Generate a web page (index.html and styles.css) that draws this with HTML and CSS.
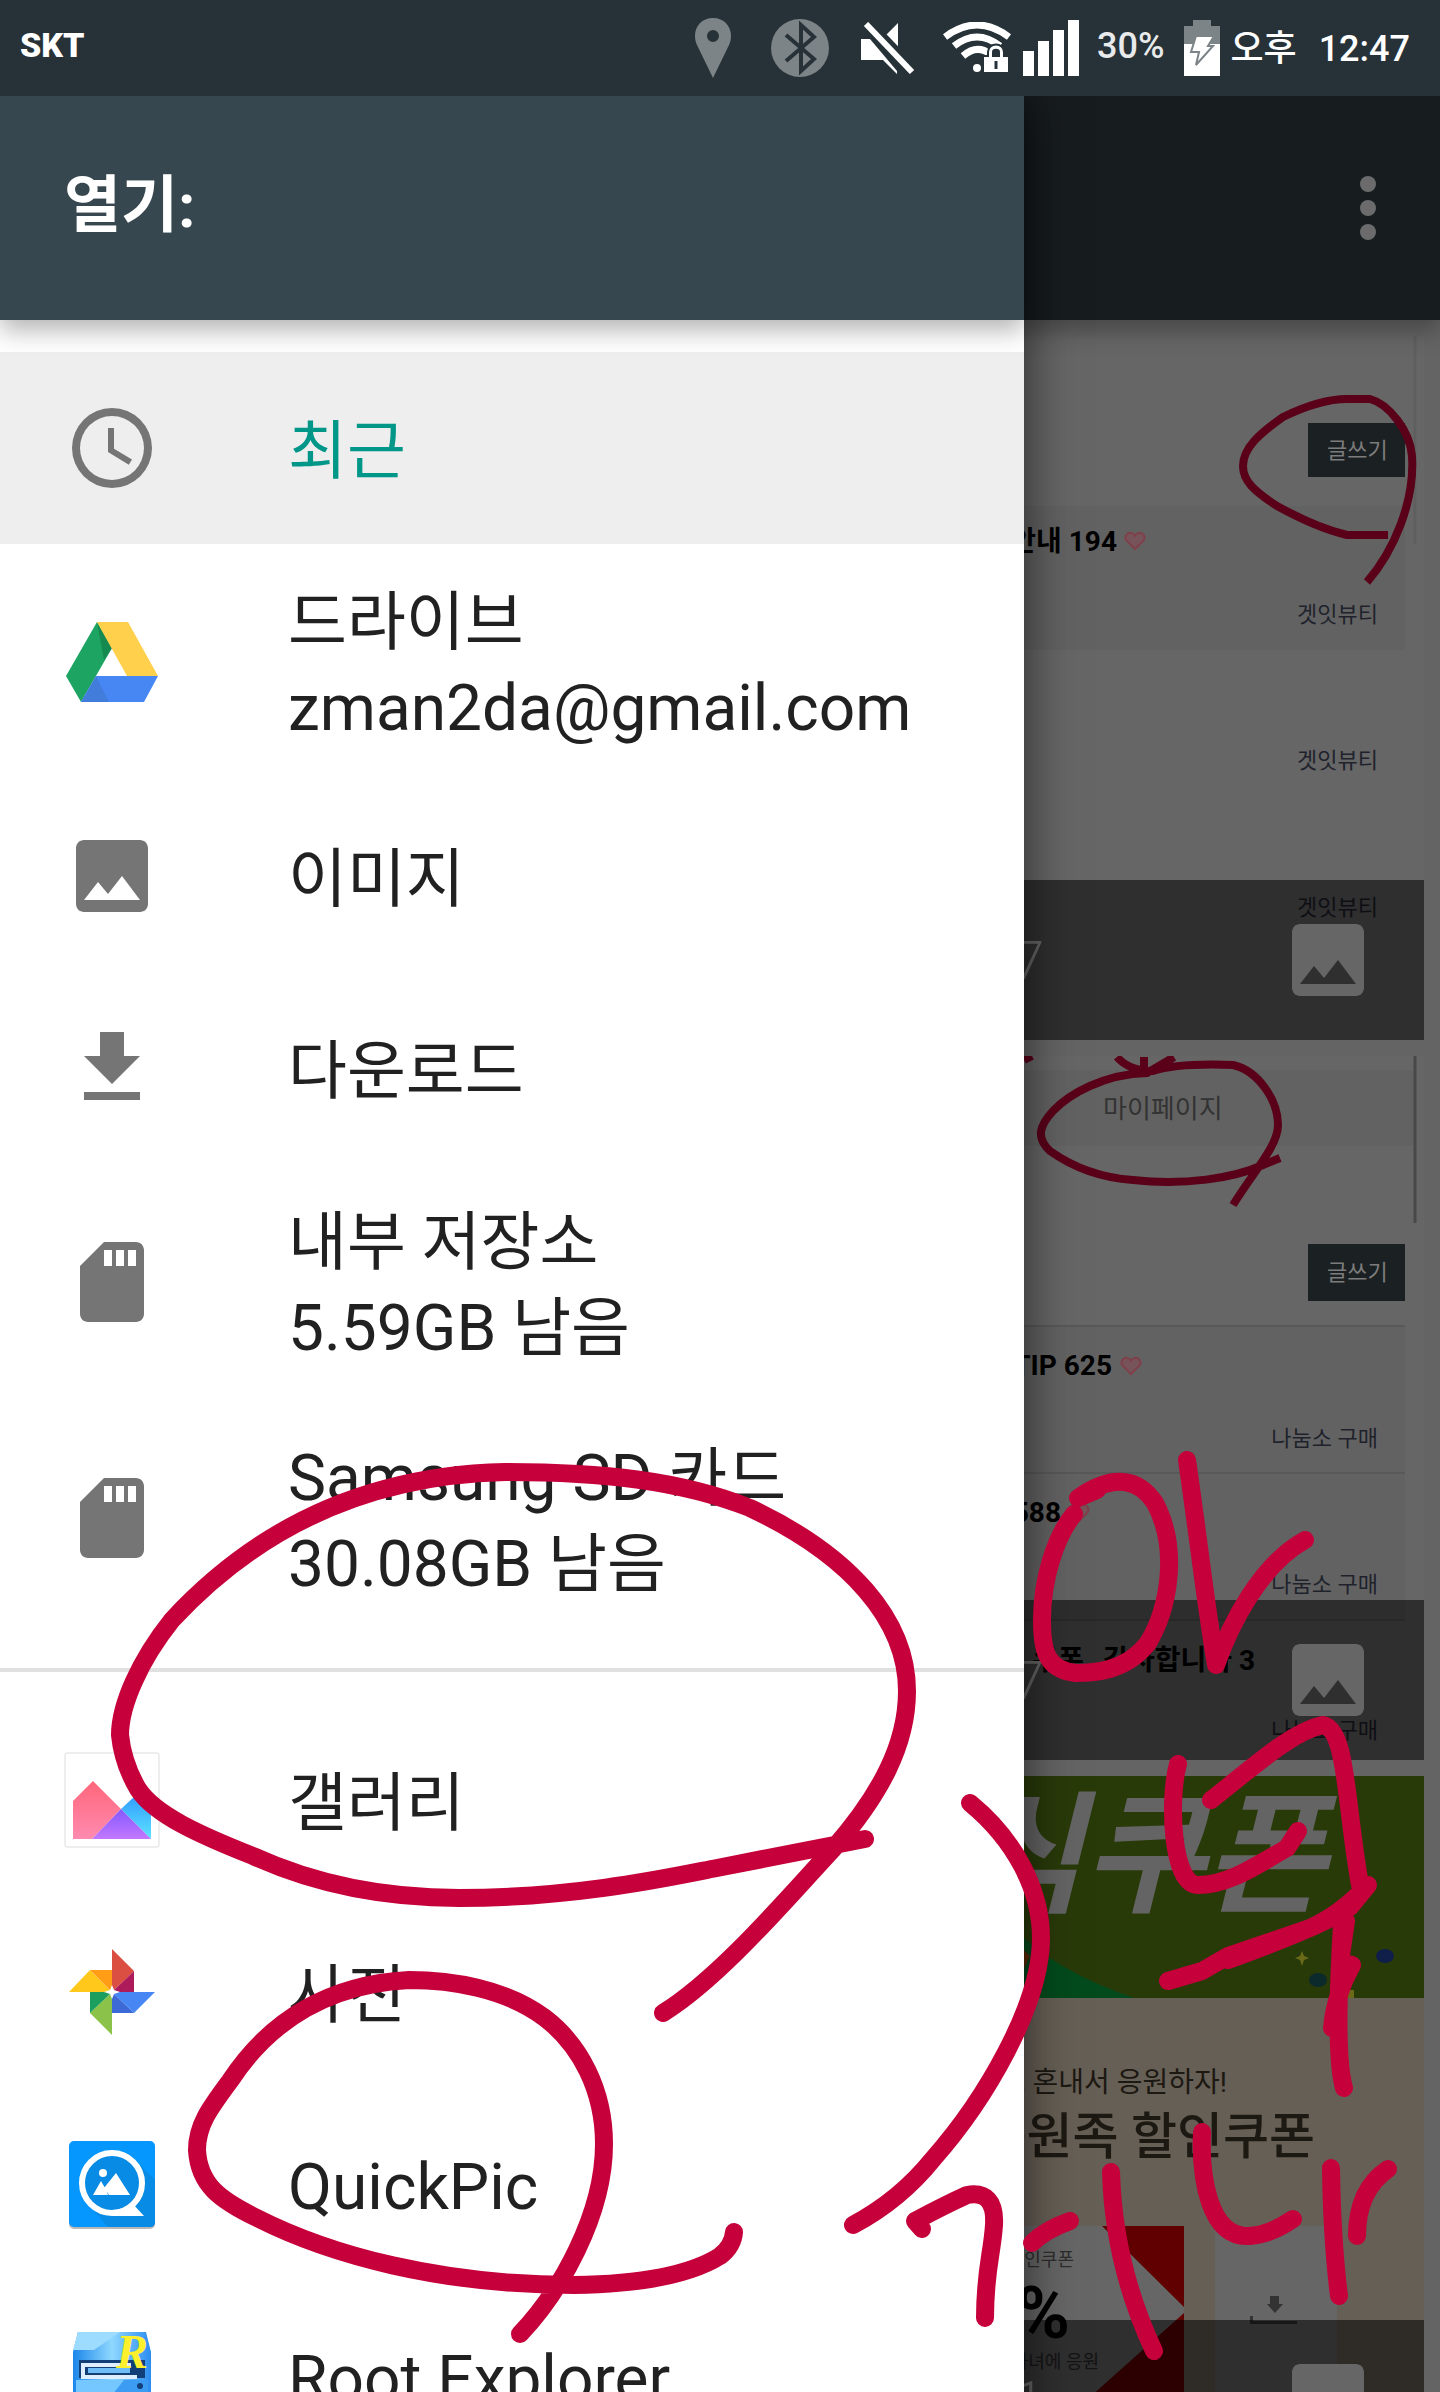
FILE: index.html
```html
<!DOCTYPE html>
<html lang="ko">
<head>
    <meta charset="UTF-8">
    <meta name="viewport" content="width=device-width, initial-scale=1.0">
    <title>열기</title>
    <link rel="stylesheet" href="styles.css">
</head>
<body>
    <svg class="defs" width="0" height="0" aria-hidden="true">
        <symbol id="icon-image" viewBox="0 0 24 24">
            <path d="M21 19V5c0-1.1-.9-2-2-2H5c-1.1 0-2 .9-2 2v14c0 1.1.9 2 2 2h14c1.1 0 2-.9 2-2zM8.5 13.5l2.5 3.01L14.5 12l4.5 6H5l3.5-4.5z"/>
        </symbol>
        <symbol id="icon-sd" viewBox="0 0 24 24">
            <path d="M18 2h-8L4 8v12c0 1.1.9 2 2 2h12c1.1 0 2-.9 2-2V4c0-1.1-.9-2-2-2zm-6 6h-2V4h2v4zm3 0h-2V4h2v4zm3 0h-2V4h2v4z"/>
        </symbol>
        <symbol id="icon-heart" viewBox="0 0 24 22">
            <path d="M12 20L3 11C-1 5 8-1 12 6c4-7 13-1 9 5z"/>
        </symbol>
    </svg>

    <header class="status-bar">
        <span class="carrier">SKT</span>
        <div class="status-icons">
            <svg class="status-icon pin" viewBox="0 0 36 60">
                <path fill-rule="evenodd" d="M18 0C7 0 0 8 0 18c0 4 1 7 2 9l16 33 16-33c1-2 2-5 2-9C36 8 29 0 18 0zm0 12a6 6 0 1 1 0 12 6 6 0 0 1 0-12z"/>
            </svg>
            <svg class="status-icon bluetooth" viewBox="0 0 58 58">
                <circle cx="29" cy="29" r="29"/>
                <path d="M15 16l28 24-13 12V6l13 12-28 24"/>
            </svg>
            <svg class="status-icon mute" viewBox="0 0 54 52">
                <path d="M0 17h9l27 32v3L22 38H0zM22 16L37 1v34z"/>
                <path class="slash-gap" d="M4 0l48 50"/>
                <path class="slash" d="M5 2l46 48"/>
            </svg>
            <svg class="status-icon wifi" viewBox="0 0 68 52">
                <path class="wave" d="M2 15Q34-9 66 15M11 24q23-18 46 0M20 34q14-12 27-2"/>
                <circle cx="34" cy="46" r="4"/>
                <path class="lock" d="M40 34h5v-4c0-10 16-10 16 0v4h5v17H40zM50 34h6v-4c0-3-6-3-6 0z"/>
                <path class="key" d="M53 39v8"/>
            </svg>
            <svg class="status-icon signal" viewBox="0 0 56 56">
                <path d="M0 31h11v25H0zM15 21h11v35H15zM30 10h11v46H30zM45 0h11v56H45z"/>
            </svg>
            <span class="percent">30%</span>
            <svg class="status-icon battery" viewBox="0 0 36 56">
                <path class="empty" d="M9 0h18v6h9v18H0V6h9z"/>
                <path d="M0 24h36v32H0z"/>
                <path class="bolt" d="M12 16h18l-6 10h5L12 45l3-13H7z"/>
            </svg>
            <span class="clock"><span>오후</span><span>12:47</span></span>
        </div>
    </header>

    <div class="screen">
        <aside class="drawer">
            <h1 class="drawer-title">열기:</h1>
            <nav class="drawer-nav">
                <ul class="roots">
                    <li>
                        <a class="root active" href="#recent">
                            <svg class="root-icon" viewBox="0 0 24 24"><path fill-rule="evenodd" d="M12 2a10 10 0 1 0 0 20 10 10 0 0 0 0-20zm0 18a8 8 0 1 1 0-16 8 8 0 0 1 0 16zM12.5 7H11v6l5.2 3.2.8-1.3-4.5-2.7z"/></svg>
                            <span class="root-text">최근</span>
                        </a>
                    </li>
                    <li>
                        <a class="root two-line" href="#drive">
                            <svg class="root-icon" viewBox="0 0 96 96">
                                <path fill="#1da362" d="M33 8l15 26-31 54L2 62z"/>
                                <path fill="#148a50" d="M33 8l15 26-8 12z"/>
                                <path fill="#ffd04b" d="M33 8h31l30 54H63z"/>
                                <path fill="#4687f4" d="M32 62h62L80 88H17z"/>
                                <path fill="#427ddb" d="M32 62l13 26H17z"/>
                            </svg>
                            <span class="root-text">드라이브<br>zman2da@gmail.com</span>
                        </a>
                    </li>
                    <li>
                        <a class="root" href="#images">
                            <svg class="root-icon"><use href="#icon-image"/></svg>
                            <span class="root-text">이미지</span>
                        </a>
                    </li>
                    <li>
                        <a class="root" href="#downloads">
                            <svg class="root-icon" viewBox="0 0 24 24"><path d="M19 9h-4V3H9v6H5l7 7 7-7zM5 18v2h14v-2H5z"/></svg>
                            <span class="root-text">다운로드</span>
                        </a>
                    </li>
                    <li>
                        <a class="root two-line" href="#internal">
                            <svg class="root-icon"><use href="#icon-sd"/></svg>
                            <span class="root-text">내부 저장소<br>5.59GB 남음</span>
                        </a>
                    </li>
                    <li>
                        <a class="root two-line" href="#sdcard">
                            <svg class="root-icon"><use href="#icon-sd"/></svg>
                            <span class="root-text">Samsung SD 카드<br>30.08GB 남음</span>
                        </a>
                    </li>
                </ul>
                <ul class="roots apps">
                    <li>
                        <a class="root" href="#gallery">
                            <svg class="root-icon" viewBox="0 0 96 96">
                                <defs>
                                    <linearGradient id="pink" x2="0" y2="1"><stop stop-color="#ff667a"/><stop offset="1" stop-color="#ff8bb0"/></linearGradient>
                                    <linearGradient id="purple" x2="0" y2="1"><stop stop-color="#8558ff"/><stop offset="1" stop-color="#c278ff"/></linearGradient>
                                    <linearGradient id="sky" x2="0" y2="1"><stop stop-color="#329cff"/><stop offset="1" stop-color="#5ce4ff"/></linearGradient>
                                </defs>
                                <rect x="1" y="1" width="94" height="94" rx="2" fill="#fff" stroke="#ddd"/>
                                <path fill="url(#pink)" d="M9 49l20-20 28 28-29 30H9z"/>
                                <path fill="url(#sky)" d="M57 57l14-13 16 16v27z"/>
                                <path fill="url(#purple)" d="M57 57l30 30H28z"/>
                            </svg>
                            <span class="root-text">갤러리</span>
                        </a>
                    </li>
                    <li>
                        <a class="root" href="#photos">
                            <svg class="root-icon" viewBox="0 0 96 96">
                                <path fill="#db4f43" d="M48 5l22 22-22 21z"/>
                                <path fill="#ad1b5b" d="M70 27v21H48z"/>
                                <path fill="#ffc81b" d="M5 48l21-22 22 22z"/>
                                <path fill="#ff9e16" d="M26 26h22v22z"/>
                                <path fill="#8bc34a" d="M48 91L26 69l22-21z"/>
                                <path fill="#1b9e5e" d="M26 48h22L26 69z"/>
                                <path fill="#4687f4" d="M91 48L70 69 48 48z"/>
                                <path fill="#3c69d6" d="M48 48l22 21H48z"/>
                                <path fill="#fff" d="M48 41l2 5 6 2-6 2-2 5-2-5-6-2 6-2z"/>
                            </svg>
                            <span class="root-text">사진</span>
                        </a>
                    </li>
                    <li>
                        <a class="root" href="#quickpic">
                            <svg class="root-icon" viewBox="0 0 96 96">
                                <rect x="5" y="7" width="86" height="86" rx="5" fill="#b8b8b8"/>
                                <rect x="5" y="5" width="86" height="86" rx="5" fill="#0597fd"/>
                                <path fill="#078be4" d="M71 24l20 20v42q0 5-5 5H44L28 72z"/>
                                <circle cx="48" cy="47" r="30" fill="#078be4" stroke="#fff" stroke-width="6"/>
                                <path fill="#fff" d="M48 74q12 0 20-7l12 13H48z"/>
                                <circle cx="39" cy="37" r="4" fill="#fff"/>
                                <path fill="#fff" d="M29 59l8-14 4 7 3 7zM40 52l12-15 14 22H45z"/>
                            </svg>
                            <span class="root-text">QuickPic</span>
                        </a>
                    </li>
                    <li>
                        <a class="root" href="#root-explorer">
                            <svg class="root-icon" viewBox="0 0 96 96">
                                <defs>
                                    <linearGradient id="cabinet"><stop stop-color="#1c86ea"/><stop offset=".5" stop-color="#8fd8ff"/><stop offset="1" stop-color="#2c8df0"/></linearGradient>
                                </defs>
                                <path fill="url(#cabinet)" d="M14 4h68l5 20v68H9V24z"/>
                                <path fill="#9edcff" d="M14 4h42L30 22H9z"/>
                                <path fill="#123f78" d="M15 32h66v18H15z"/>
                                <path fill="#dceeff" d="M17 35h50v4H21v8h52v4H17z"/>
                                <path fill="#6fbdf6" d="M24 40h42v5H24z"/>
                                <path fill="#3c9cf4" d="M12 52h72v38H12z"/>
                                <path fill="#74c8ff" d="M12 52h48L30 90H12z"/>
                                <circle cx="76" cy="58" r="3" fill="#123f78"/>
                                <text class="root-r" x="52" y="40">R</text>
                            </svg>
                            <span class="root-text">Root Explorer</span>
                        </a>
                    </li>
                </ul>
            </nav>
        </aside>

        <main class="content">
            <div class="toolbar">
                <button class="more" type="button" aria-label="옵션 더보기">
                    <i class="dot"></i><i class="dot"></i><i class="dot"></i>
                </button>
            </div>
            <div class="grid">
                <figure class="tile">
                    <svg class="thumb" viewBox="0 0 400 704" preserveAspectRatio="xMaxYMin slice">
                        <path class="band" d="M0 170h381v144H0z"/>
                        <path class="scroll faint" d="M391 0v208"/>
                        <path class="badge" d="M284 87h97v54h-97z"/>
                        <text class="badge-text" x="303" y="122">글쓰기</text>
                        <path class="scribble" d="M364 199H323Q293 192 253 170C230 155 219 145 219 130 219 112 235 98 259 81Q296 63 323 63H346C365 68 386 95 388 120 391 165 370 215 343 246"/>
                        <text class="post" x="93" y="215">안내 194</text>
                        <use class="heart" href="#icon-heart" x="99" y="194" width="24" height="21"/>
                        <text class="link" x="354" y="286">겟잇뷰티</text>
                        <text class="link" x="354" y="432">겟잇뷰티</text>
                        <text class="link" x="354" y="579">겟잇뷰티</text>
                    </svg>
                    <figcaption class="caption">
                        <span class="date">7</span>
                        <svg class="type-icon"><use href="#icon-image"/></svg>
                    </figcaption>
                </figure>
                <figure class="tile">
                    <svg class="thumb" viewBox="0 0 400 704" preserveAspectRatio="xMaxYMin slice">
                        <path class="band" d="M0 14h391v76H0zM0 270h381v294H0z"/>
                        <path class="scroll" d="M391 0v167"/>
                        <text class="tab" x="79" y="62">마이페이지</text>
                        <path class="scribble" d="M0 4L8 0M93 1Q105 15 129 15C150 8 180 8 209 9 235 15 254 45 254 69 254 90 230 115 209 149M150 1L123 17C80 18 45 38 29 55 15 70 12 82 26 95 50 112 80 122 109 124 160 130 210 122 239 109L256 102M120 1v14"/>
                        <path class="badge" d="M284 188h97v57h-97z"/>
                        <text class="badge-text" x="303" y="224">글쓰기</text>
                        <path class="rule" d="M0 270h381M0 417h381M0 564h381"/>
                        <text class="post" x="88" y="319">TIP 625</text>
                        <use class="heart" href="#icon-heart" x="95" y="299" width="24" height="21"/>
                        <text class="link" x="354" y="390">나눔소 구매</text>
                        <text class="post" x="37" y="466">588</text>
                        <use class="heart" href="#icon-heart" x="43" y="446" width="24" height="21"/>
                        <text class="link" x="354" y="536">나눔소 구매</text>
                        <text class="post" x="231" y="614">쿠폰 _감사합니다 3</text>
                        <text class="link" x="354" y="682">나눔소 구매</text>
                    </svg>
                    <figcaption class="caption">
                        <span class="date">7</span>
                        <svg class="type-icon"><use href="#icon-image"/></svg>
                    </figcaption>
                </figure>
                <figure class="tile">
                    <svg class="thumb" viewBox="0 0 400 704" preserveAspectRatio="xMaxYMin slice">
                        <path fill="#665f55" d="M0 222h400v482H0z"/>
                        <path fill="#293a09" d="M0 0h400v222H0z"/>
                        <path fill="#034a1c" d="M0 162q40 36 110 60H0z"/>
                        <path fill="#5a2a08" d="M0 174l6 6-6 13z"/>
                        <ellipse fill="#101e4a" cx="361" cy="180" rx="9" ry="7"/>
                        <ellipse fill="#0c2a2c" cx="294" cy="204" rx="9" ry="7"/>
                        <path fill="#6a6a18" d="M278 175l2 5 5 2-5 2-2 6-2-6-5-2 5-2zM322 214h8v8h-8z"/>
                        <text class="coupon" x="302" y="126">식쿠폰</text>
                        <text class="lead" x="203" y="316">고 혼내서 응원하자!</text>
                        <text class="headline" x="291" y="378">응원족 할인쿠폰</text>
                        <path fill="#666" d="M0 450h160v254H0zM191 450h122v254H191z"/>
                        <path fill="#610000" d="M78 450h82v81zM160 537v167H0v-24z"/>
                        <text class="small" x="50" y="490">할인쿠폰</text>
                        <text class="rate" x="46" y="562">%</text>
                        <text class="small" x="75" y="592">자녀에 응원</text>
                        <path fill="#333" d="M246 520h9v8h4l-8 9-8-9h3zM226 540h3v5h44v3h-47z"/>
                    </svg>
                    <figcaption class="caption">
                        <span class="date">1</span>
                        <svg class="type-icon"><use href="#icon-image"/></svg>
                    </figcaption>
                </figure>
            </div>
        </main>
    </div>

    <!-- Pen strokes drawn over the whole screen -->
    <svg class="pen" viewBox="0 0 1440 2392" preserveAspectRatio="none" aria-hidden="true">
        <path d="M663 2013C720 1978 790 1895 833 1849 880 1795 907 1745 907 1691 907 1620 850 1555 750 1508 680 1480 600 1472 505 1472 370 1475 260 1525 172 1620 140 1660 120 1705 120 1735 122 1755 128 1772 138 1789 155 1815 200 1835 253 1856 310 1882 380 1898 459 1898 580 1898 680 1875 717 1868L865 1839"/>
        <path d="M520 2334C560 2292 604 2215 604 2144 604 2090 580 2045 545 2018 505 1988 450 1980 409 1980 330 1984 270 2020 230 2081 210 2108 197 2125 197 2150 199 2185 220 2200 257 2218 330 2255 440 2285 574 2285 640 2284 690 2275 720 2256Q733 2246 734 2232"/>
        <path d="M970 1803C1015 1840 1041 1890 1041 1938 1041 2005 985 2100 933 2159Q900 2200 853 2225"/>
        <path d="M922 2229L915 2221Q945 2205 967 2195 996 2190 994 2225C992 2255 985 2270 985 2318"/>
        <path d="M1032 2243Q1045 2230 1070 2221"/>
        <path d="M1111 2172C1113 2240 1130 2300 1154 2351"/>
        <path d="M1202 2132C1200 2180 1210 2236 1247 2236Q1268 2236 1293 2219"/>
        <path d="M1331 2168Q1332 2240 1339 2296"/>
        <path d="M1388 2169Q1357 2190 1357 2236"/>
        <path d="M1178 1764C1168 1800 1172 1885 1198 1885 1230 1885 1260 1863 1287 1848L1298 1831"/>
        <path d="M1211 1800C1250 1770 1290 1732 1323 1725 1347 1730 1345 1800 1360 1885"/>
        <path d="M1168 1981L1202 1971 1228 1956 1310 1928Q1340 1915 1368 1885L1350 1907Q1325 1925 1228 1960"/>
        <path d="M1346 1921L1340 1962 1352 1965Q1335 1995 1332 2028M1342 1925C1338 1990 1336 2060 1344 2088"/>
        <path d="M1097 1490L1078 1498C1115 1472 1140 1480 1155 1503 1180 1550 1168 1610 1148 1643 1125 1673 1090 1673 1076 1673 1046 1670 1042 1650 1042 1620 1042 1580 1055 1537 1074 1514"/>
        <path d="M1187 1460C1200 1550 1205 1600 1216 1665 1230 1625 1260 1565 1305 1540"/>
    </svg>
</body>
</html>
```
FILE: styles.css
```css
* {
    box-sizing: border-box;
    margin: 0;
    padding: 0;
}

body {
    position: relative;
    display: flex;
    flex-direction: column;
    height: 100vh;
    overflow: hidden;
    background-color: #646464;
    color: #212121;
    font-family: Roboto, "Noto Sans CJK KR", sans-serif;
}

.defs {
    position: absolute;
}

/* Status bar */
.status-bar {
    position: relative;
    z-index: 3;
    display: flex;
    flex: none;
    align-items: center;
    justify-content: space-between;
    height: 96px;
    padding: 0 30px 0 20px;
    background: #273238;
    color: #fff;
    font-size: 36px;
    font-weight: 500;
}

.carrier {
    font-weight: 900;
    font-size: 34px;
    padding-bottom: 6px;
}

.status-icons {
    display: flex;
    align-items: center;
}

.status-icon {
    flex: none;
    fill: #fff;
}

.pin {
    width: 36px;
    height: 60px;
    margin-right: 40px;
    fill: #7c8487;
}

.bluetooth {
    width: 58px;
    height: 58px;
    margin-right: 32px;
    fill: #7c8487;
}

.bluetooth path {
    fill: none;
    stroke: #273238;
    stroke-width: 4;
}

.mute {
    width: 54px;
    height: 52px;
    margin-right: 28px;
}

.slash-gap {
    stroke: #273238;
    stroke-width: 14;
}

.slash {
    stroke: #fff;
    stroke-width: 6;
}

.wifi {
    width: 68px;
    height: 52px;
    margin-right: 12px;
}

.wave {
    fill: none;
    stroke: #fff;
    stroke-width: 7;
}

.lock {
    fill-rule: evenodd;
    stroke: #273238;
    stroke-width: 2;
}

.key {
    stroke: #273238;
    stroke-width: 3;
}

.signal {
    width: 56px;
    height: 56px;
    margin-right: 18px;
}

.percent {
    padding-bottom: 4px;
    color: #e8eaeb;
    margin-right: 20px;
}

.battery {
    width: 36px;
    height: 56px;
    margin-right: 10px;
}

.clock {
    display: flex;
    align-items: baseline;
    gap: 22px;
    padding-bottom: 6px;
}

.empty {
    fill: #7c8487;
}

.bolt {
    stroke: #7c8487;
    stroke-width: 2;
}

/* Drawer + content */
.screen {
    display: grid;
    flex: 1;
    grid-template-columns: 32fr 13fr;
    min-height: 0;
}

.drawer {
    position: relative;
    z-index: 2;
    min-width: 0;
    background: #fff;
    box-shadow: 0 0 48px rgba(0, 0, 0, 0.6);
}

.drawer-title {
    position: relative;
    display: flex;
    align-items: center;
    height: 224px;
    padding: 0 64px 16px;
    background: #37474f;
    color: #fff;
    font-size: 62px;
    font-weight: 700;
    box-shadow: 0 10px 24px rgba(0, 0, 0, 0.3);
}

.roots {
    list-style: none;
    padding: 32px 0;
}

.apps {
    border-top: 4px solid #e0e0e0;
}

.root {
    display: flex;
    align-items: center;
    gap: 128px;
    height: 192px;
    padding: 0 64px;
    color: #212121;
    font-size: 64px;
    line-height: 86px;
    text-decoration: none;
}

.two-line {
    height: 236px;
}

.active {
    background: #eee;
    color: #009688;
}

.root-icon {
    flex: none;
    width: 96px;
    height: 96px;
    fill: #757575;
}

.root-text {
    padding-top: 8px;
    white-space: nowrap;
}

.root-r {
    fill: #fff02e;
    font-family: "Liberation Serif", serif;
    font-size: 48px;
    font-style: italic;
    font-weight: 700;
}

.content {
    display: flex;
    flex-direction: column;
    min-width: 0;
    overflow: hidden;
}

.toolbar {
    position: relative;
    z-index: 1;
    display: flex;
    flex: none;
    align-items: center;
    justify-content: flex-end;
    height: 224px;
    padding-right: 40px;
    background: #171c1f;
    box-shadow: 0 10px 24px rgba(0, 0, 0, 0.3);
}

.more {
    display: flex;
    flex-direction: column;
    align-items: center;
    gap: 8px;
    width: 64px;
    border: none;
    background: none;
    cursor: pointer;
}

.dot {
    width: 16px;
    height: 16px;
    border-radius: 50%;
    background: #6b6b6b;
}

/* Thumbnails */
.grid {
    display: flex;
    flex-direction: column;
    gap: 16px;
    padding: 16px 16px 16px 0;
}

.tile {
    position: relative;
    flex: none;
    height: 704px;
    overflow: hidden;
    background: #666;
}

.thumb {
    display: block;
    width: 100%;
    height: 100%;
}

.caption {
    position: absolute;
    right: 0;
    bottom: 0;
    left: 0;
    display: flex;
    align-items: center;
    justify-content: space-between;
    height: 160px;
    padding-right: 48px;
    background: rgba(0, 0, 0, 0.54);
}

.date {
    margin-left: -10px;
    color: #646464;
    font-size: 54px;
    font-weight: 300;
}

.type-icon {
    width: 96px;
    height: 96px;
    fill: #666;
}

.band {
    fill: #626262;
}

.badge {
    fill: #1b2023;
}

.badge-text {
    fill: #7c7c7c;
    font-size: 22px;
}

.scribble {
    fill: none;
    stroke: #5a0019;
    stroke-width: 8;
}

.scroll {
    fill: none;
    stroke: #484848;
    stroke-width: 3;
}

.faint {
    stroke: #5f5f5f;
}

.rule {
    stroke: #585858;
    stroke-width: 2;
}

.post {
    fill: #000;
    font-size: 28px;
    font-weight: 700;
    text-anchor: end;
}

.heart {
    fill: #76545a;
    stroke: #803f4a;
    stroke-width: 2;
}

.link {
    fill: #1f222c;
    font-size: 22px;
    text-anchor: end;
}

.tab {
    fill: #333;
    font-size: 26px;
}

.coupon {
    fill: #646464;
    font-size: 132px;
    font-style: italic;
    font-weight: 700;
    text-anchor: end;
}

.lead {
    fill: #1c1812;
    font-size: 28px;
    text-anchor: end;
}

.headline {
    fill: #1c1812;
    font-size: 50px;
    font-weight: 500;
    text-anchor: end;
}

.small {
    fill: #2c2c2c;
    font-size: 18px;
    text-anchor: end;
}

.rate {
    fill: #000;
    font-size: 72px;
    font-weight: 700;
    text-anchor: end;
}

/* Pen layer */
.pen {
    position: absolute;
    z-index: 4;
    top: 0;
    left: 0;
    width: 100%;
    height: 100%;
    fill: none;
    stroke: #c5003a;
    stroke-width: 18;
    stroke-linecap: round;
    stroke-linejoin: round;
    pointer-events: none;
}
```
